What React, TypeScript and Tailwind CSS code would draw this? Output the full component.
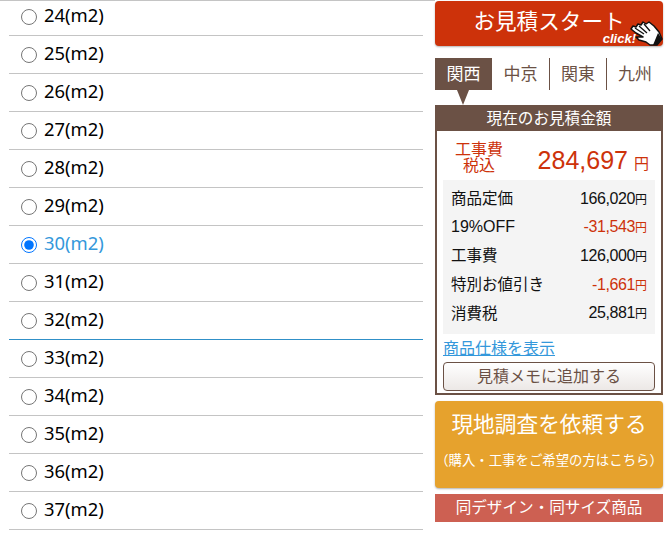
const sans = '[font-family:"Liberation_Sans","Noto_Sans_CJK_JP",sans-serif]'

const sizes = [24, 25, 26, 27, 28, 29, 30, 31, 32, 33, 34, 35, 36, 37]
const areas = ['関西', '中京', '関東', '九州']
const prices = [
  { label: '商品定価', value: '166,020' },
  { label: '19%OFF', value: '-31,543', red: true },
  { label: '工事費', value: '126,000' },
  { label: '特別お値引き', value: '-1,661', red: true },
  { label: '消費税', value: '25,881' },
]

function HandIcon() {
  return (
    <svg viewBox="0 0 33 25" className="absolute right-0 bottom-0 w-[33px] h-[25px]">
      <path
        d="M1 8 L3 5 L6 6 L8 3 L11 4 L13 1 L16 3 L19 1 L24 5 L29 11 L32 18 L27 24 L20 24 L16 21 L9 19 L6 16 L13 16 L6 12 Z"
        fill="#fff"
        stroke="#111"
        strokeWidth="1.5"
        strokeLinejoin="round"
      />
      <path d="M5 7 L14 13 M9 5 L17 12 M14 3 L20 10" stroke="#111" strokeWidth="1.3" fill="none" />
      <path d="M28 12 L32 18 L27 24 L23 24 Z" fill="#111" />
    </svg>
  )
}

export default function App() {
  return (
    <div className={`w-[671px] h-[533px] overflow-hidden bg-white flex ${sans}`}>
      <div className="w-[435px] shrink-0 pl-[9px] pr-3">
        <div className="border-t border-[#c4c4c4] -ml-[9px] -mr-3" />
        <div className="-mt-[3px]">
          {sizes.map(size => (
            <label
              key={size}
              className={`h-[38px] flex items-center pb-[4px] border-b ${size === 32 ? 'border-[#3090c8]' : 'border-[#c4c4c4]'} ${size === 30 ? 'text-[#3498db]' : 'text-black'}`}
            >
              <input
                type="radio"
                name="size"
                defaultChecked={size === 30}
                className="w-4 h-4 m-0 ml-3 mr-[7px] mt-[5px]"
              />
              <span className='text-[18.4px] leading-[26px] [font-family:"Noto_Sans","Liberation_Sans",sans-serif]'>{size}(m2)</span>
            </label>
          ))}
        </div>
      </div>

      <div className="w-[228px] shrink-0 pt-px">
        <div className="relative h-[45px] rounded bg-[#cd320a] text-white shadow-[0_1px_2px_rgba(0,0,0,0.3)] flex items-center justify-center text-[21.6px] pb-[3px]">
          <span className="leading-[22px]">お見積スタート</span>
          <span className="absolute right-[27px] bottom-[1px] text-[13px] leading-[12px] italic font-bold">click!</span>
          <HandIcon />
        </div>

        <div className="flex mt-3 h-8 text-[17px]">
          {areas.map((area, i) => (
            <div
              key={area}
              className={`relative flex items-center justify-center pt-[1px] ${i === 0 ? 'w-[57px] bg-[#6b5145] text-white' : 'text-[#6b5145] w-[57px]'} ${i === 2 || i === 3 ? 'border-l border-[#6b5145]' : ''}`}
            >
              {area}
              {i === 0 && (
                <div className="absolute left-[22px] top-8 w-0 h-0 border-x-[6px] border-x-transparent border-t-[15px] border-t-[#6b5145]" />
              )}
            </div>
          ))}
        </div>

        <div className="mt-[15px] border-2 border-[#6b5145] h-[290px]">
          <div className="-mx-px -mt-px bg-[#6b5145] text-white text-[15.6px] h-[25px] flex items-center justify-center">
            現在のお見積金額
          </div>
          <div className="px-[6px]">
            <div className="flex items-end h-[49px] text-[#cd320a]">
              <div className="w-[66px] text-center text-[16px] leading-[16px] pb-[6px] pl-[6px]">
                <div>工事費</div>
                <div>税込</div>
              </div>
              <div className="flex-1 text-right pr-[6px] leading-[32px]">
                <span className="text-[25px] mr-px">284,697</span>
                <span className="text-[15px] ml-[5px]">円</span>
              </div>
            </div>
            <div className="bg-[#f4f4f4] h-[154px] px-2 pt-[4.5px] text-[15.5px] text-[#111]">
              {prices.map(row => (
                <div key={row.label} className="h-[28.6px] flex items-center justify-between">
                  <span className={row.label === '19%OFF' ? 'text-[16px]' : ''}>{row.label}</span>
                  <span className={`text-[16px] tracking-[-0.4px] ${row.red ? 'text-[#cd320a]' : ''}`}>
                    {row.value}
                    <span className="text-[12px] tracking-normal">円</span>
                  </span>
                </div>
              ))}
            </div>
            <div className="text-[16px] leading-[18px] mt-[6px] text-[#3498db] underline">商品仕様を表示</div>
            <div className="mt-[4px] h-[29px] rounded border border-[#6b5145] bg-gradient-to-b from-white to-[#ece8e6] text-[#6b5145] text-[16px] flex items-center justify-center">
              見積メモに追加する
            </div>
          </div>
        </div>

        <div className="mt-[6px] h-[87px] rounded bg-[#e6a22d] text-white text-center shadow-[0_1px_2px_rgba(0,0,0,0.3)]">
          <div className="text-[21.7px] leading-[30px] pt-[9px]">現地調査を依頼する</div>
          <div className="text-[13.4px] leading-[18px] mt-[12px]">（購入・工事をご希望の方はこちら）</div>
        </div>

        <div className="mt-[6px] h-[28px] bg-[#cd6052] text-white text-[15.6px] flex items-center justify-center">
          同デザイン・同サイズ商品
        </div>
      </div>
    </div>
  )
}
